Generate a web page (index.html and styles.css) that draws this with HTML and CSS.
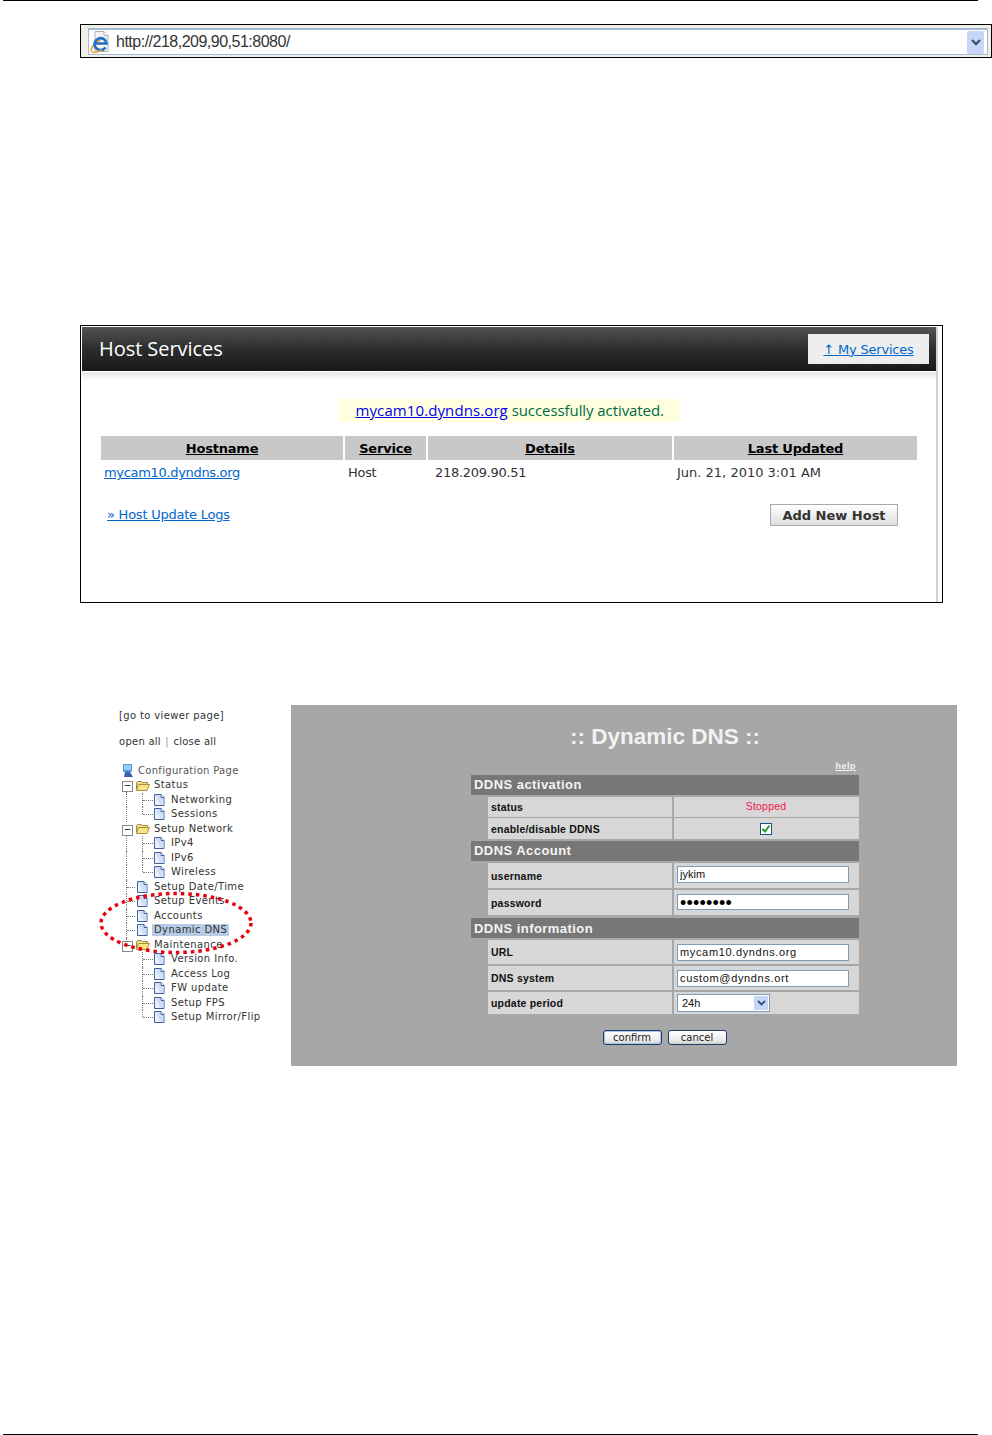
FILE: index.html
```html
<!DOCTYPE html>
<html lang="en">
<head>
<meta charset="utf-8">
<title>Dynamic DNS setup</title>
<link rel="stylesheet" href="styles.css">
</head>
<body>
<svg class="defs" width="0" height="0" aria-hidden="true">
  <symbol id="page" viewBox="0 0 12 12">
    <path d="M1.500.5h6.500l3 3v8h-9.500z" fill="#eaf1fb" stroke="#3f5f9f"/>
    <path d="M2 1h5v3h3.500v7h-3z" fill="#cfdff5"/>
    <path d="M8 .5v3h3" fill="#fff" stroke="#3f5f9f"/>
  </symbol>
  <symbol id="folder" viewBox="0 0 14 11">
    <path d="M.5 9.500V2.500l1-1h4l1 1h5v2" fill="#f3dc83" stroke="#9a8a4a"/>
    <path d="M.5 10.500l2-6h11l-2.500 6z" fill="#f7e487" stroke="#a5913a"/>
  </symbol>
</svg>

<div class="rule"></div>

<section class="addr">
  <div class="addr-field">
    <svg class="ie" width="22" height="24" viewBox="0 0 22 24" aria-hidden="true">
      <path d="M6 1.500h9l4 4v16H6z" fill="#f4f4f4" stroke="#b0b0b0"/>
      <path d="M15 1.500v4h4" fill="#fff" stroke="#b0b0b0"/>
      <path d="M2.500 21.500c-1.500-3 3.500-9 9-12" fill="none" stroke="#e9a93a" stroke-width="2"/>
      <path d="M16.500 17.500a6 6 0 1 1 1-4H6.500" fill="none" stroke="#1f6fc9" stroke-width="2.600"/>
      <path d="M3 22c2 1 6 0 10-2" fill="none" stroke="#e9a93a" stroke-width="1.500"/>
    </svg>
    <span class="addr-url">http://218,209,90,51:8080/</span>
    <span class="addr-btn">
      <svg width="10" height="7" viewBox="0 0 10 7" aria-hidden="true"><path d="M1 1l4 4 4-4" fill="none" stroke="#3d4f6b" stroke-width="2.400"/></svg>
    </span>
  </div>
</section>

<section class="host">
  <div class="host-inner">
    <header class="host-head">
      <h1 class="host-title">Host Services</h1>
      <div class="my-services"><a href="#">↑ My Services</a></div>
    </header>
    <div class="host-shade"></div>
    <div class="msg-wrap">
      <p class="msg"><a href="#">mycam10.dyndns.org</a> successfully activated.</p>
    </div>
    <div class="host-table">
      <div class="ht-row ht-heads">
        <div class="c1"><u>Hostname</u></div>
        <div class="c2"><u>Service</u></div>
        <div class="c3"><u>Details</u></div>
        <div class="c4"><u>Last Updated</u></div>
      </div>
      <div class="ht-row ht-data">
        <div class="c1"><a href="#">mycam10.dyndns.org</a></div>
        <div class="c2 narrow">Host</div>
        <div class="c3 pad3 narrow">218.209.90.51</div>
        <div class="c4">Jun. 21, 2010 3:01 AM</div>
      </div>
    </div>
    <div class="host-foot">
      <a class="logs" href="#">» Host Update Logs</a>
      <button class="add-host" type="button">Add New Host</button>
    </div>
  </div>
</section>

<section class="config">
  <nav class="tree">
    <div class="tree-link">[go to viewer page]</div>
    <div class="tree-open">open all <span class="sep">|</span> close all</div>
    <div class="tn tn-root">
      <svg class="computer" width="13" height="14" viewBox="0 0 13 14" aria-hidden="true">
        <rect x="2" y="0" width="9" height="8" rx="1" fill="#5b8fd8"/>
        <rect x="3" y="1" width="7" height="5" fill="#8fd0f5"/>
        <path d="M4 8h5l3 5H3z" fill="#3b5fb0"/>
      </svg>
      <span class="lbl root-lbl">Configuration Page</span>
    </div>

    <div class="tn"><span class="cell box vline"></span><svg class="ico-f"><use href="#folder"/></svg><span class="lbl">Status</span></div>
    <div class="tn"><span class="cell v1"></span><span class="cell2 tee"></span><svg class="ico-p"><use href="#page"/></svg><span class="lbl">Networking</span></div>
    <div class="tn"><span class="cell v1"></span><span class="cell2 ell"></span><svg class="ico-p"><use href="#page"/></svg><span class="lbl">Sessions</span></div>

    <div class="tn"><span class="cell box vline"></span><svg class="ico-f"><use href="#folder"/></svg><span class="lbl">Setup Network</span></div>
    <div class="tn"><span class="cell v1"></span><span class="cell2 tee"></span><svg class="ico-p"><use href="#page"/></svg><span class="lbl">IPv4</span></div>
    <div class="tn"><span class="cell v1"></span><span class="cell2 tee"></span><svg class="ico-p"><use href="#page"/></svg><span class="lbl">IPv6</span></div>
    <div class="tn"><span class="cell v1"></span><span class="cell2 ell"></span><svg class="ico-p"><use href="#page"/></svg><span class="lbl">Wireless</span></div>

    <div class="tn"><span class="cell v1 h1"></span><svg class="ico-p1"><use href="#page"/></svg><span class="lbl">Setup Date/Time</span></div>
    <div class="tn"><span class="cell v1 h1"></span><svg class="ico-p1"><use href="#page"/></svg><span class="lbl">Setup Events</span></div>
    <div class="tn"><span class="cell v1 h1"></span><svg class="ico-p1"><use href="#page"/></svg><span class="lbl">Accounts</span></div>
    <div class="tn"><span class="cell v1 h1"></span><svg class="ico-p1"><use href="#page"/></svg><span class="lbl sel">Dynamic DNS</span></div>

    <div class="tn"><span class="cell box end"></span><svg class="ico-f"><use href="#folder"/></svg><span class="lbl">Maintenance</span></div>
    <div class="tn"><span class="cell"></span><span class="cell2 tee"></span><svg class="ico-p"><use href="#page"/></svg><span class="lbl">Version Info.</span></div>
    <div class="tn"><span class="cell"></span><span class="cell2 tee"></span><svg class="ico-p"><use href="#page"/></svg><span class="lbl">Access Log</span></div>
    <div class="tn"><span class="cell"></span><span class="cell2 tee"></span><svg class="ico-p"><use href="#page"/></svg><span class="lbl">FW update</span></div>
    <div class="tn"><span class="cell"></span><span class="cell2 tee"></span><svg class="ico-p"><use href="#page"/></svg><span class="lbl">Setup FPS</span></div>
    <div class="tn"><span class="cell"></span><span class="cell2 ell"></span><svg class="ico-p"><use href="#page"/></svg><span class="lbl">Setup Mirror/Flip</span></div>
  </nav>

  <svg class="circle" width="160" height="68" viewBox="0 0 160 68" aria-hidden="true">
    <ellipse cx="77" cy="32" rx="75" ry="29.500" fill="none" stroke="#e8000f" stroke-width="3.500" stroke-dasharray="3.500 4"/>
  </svg>

  <main class="panel">
    <h2 class="panel-title">:: Dynamic DNS ::</h2>
    <div class="help-line"><a href="#">help</a></div>
    <div class="ddns">
      <div class="sec">DDNS activation</div>
      <div class="row h20"><div class="k">status</div><div class="v center stopped">Stopped</div></div>
      <div class="row h21 tight"><div class="k">enable/disable DDNS</div><div class="v center">
        <span class="check"><svg width="10" height="10" viewBox="0 0 10 10" aria-hidden="true"><path d="M1.500 5l2.500 2.500 4.500-6" fill="none" stroke="#21a121" stroke-width="2"/></svg></span>
      </div></div>

      <div class="sec gap2">DDNS Account</div>
      <div class="row h25"><div class="k">username</div><div class="v v-up"><input class="inp" type="text" value="jykim"></div></div>
      <div class="row h25"><div class="k">password</div><div class="v v-up"><input class="inp pw" type="password" value="password"></div></div>

      <div class="sec gap3">DDNS information</div>
      <div class="row h24"><div class="k">URL</div><div class="v"><input class="inp wide" type="text" value="mycam10.dyndns.org"></div></div>
      <div class="row h24"><div class="k">DNS system</div><div class="v"><input class="inp wide" type="text" value="custom@dyndns.ort"></div></div>
      <div class="row h22"><div class="k">update period</div><div class="v">
        <div class="sel-box"><span>24h</span><span class="sel-btn"><svg width="9" height="6" viewBox="0 0 9 6" aria-hidden="true"><path d="M1 1l3.500 3.500L8 1" fill="none" stroke="#3d4f6b" stroke-width="1.800"/></svg></span></div>
      </div></div>
    </div>
    <div class="actions">
      <button class="btn btn-confirm" type="button">confirm</button>
      <button class="btn" type="button">cancel</button>
    </div>
  </main>
</section>

<div class="rule rule-bottom"></div>
</body>
</html>
```

FILE: styles.css
```css
* { box-sizing: border-box; }
html, body { margin: 0; padding: 0; background: #fff; }
body {
  width: 992px;
  height: 1435px;
  display: flex;
  flex-direction: column;
  overflow: hidden;
  font-family: "DejaVu Sans", sans-serif;
}
.defs { position: absolute; }
.rule { height: 1px; width: 975px; margin-left: 3px; background: #000; flex: none; }
.rule-bottom { margin-top: auto; }

/* address bar */
.addr {
  margin: 23px 0 0 80px;
  width: 912px;
  height: 34px;
  border: 1px solid #000;
  background: #f1f0e8;
  padding: 3px 3px 1px 7px;
  flex: none;
}
.addr-field {
  height: 27px;
  border: 1px solid #a4b9d6;
  border-top: 2px solid #a4b9d6;
  background: #fff;
  display: flex;
  align-items: center;
  padding-right: 3px;
}
.ie { flex: none; }
.addr-url {
  margin-left: 5px;
  font: 16px "Liberation Sans", sans-serif;
  color: #333;
  letter-spacing: -.5px;
}
.addr-btn {
  margin-left: auto;
  width: 17px;
  height: 23px;
  background: #c6d6f9;
  border-radius: 2px;
  display: flex;
  align-items: center;
  justify-content: center;
}

/* host services */
.host {
  margin: 267px 0 0 80px;
  width: 863px;
  height: 278px;
  border: 1px solid #000;
  padding: 1px 4px 0 1px;
  background: #fff;
  flex: none;
}
.host-inner {
  height: 100%;
  border-right: 2px solid #d2d2d2;
  width: 856px;
}
.host-head {
  height: 44px;
  background:
    repeating-linear-gradient(90deg, rgba(255,255,255,.015) 0 1px, transparent 1px 3px),
    linear-gradient(#525252, #2c2c2c 50%, #181818);
  display: flex;
  align-items: center;
  justify-content: space-between;
  padding: 0 7px 0 17px;
}
.host-title {
  margin: 0 0 2px;
  font: 400 20px "Open Sans", sans-serif;
  color: #fff;
  letter-spacing: -.06px;
}
.my-services {
  width: 121px;
  height: 30px;
  background: #eee;
  display: flex;
  align-items: center;
  justify-content: center;
  font-size: 13px;
  letter-spacing: -.2px;
}
.my-services a, .host-table a, .logs { color: #0066cc; }
.host-shade {
  height: 9px;
  margin-top: 1px;
  background: linear-gradient(#e6e6e6, #fff);
}
.msg-wrap { display: flex; justify-content: center; margin-top: 18px; }
.msg {
  margin: 0;
  width: 341px;
  height: 23px;
  background: #ffffe0;
  color: #006b45;
  font: 15px/23px "Open Sans", sans-serif;
  letter-spacing: -.08px;
  padding-left: 17px;
}
.msg a { color: #0000ee; letter-spacing: .1px; }
.host-table { margin: 14px 0 0 19px; width: 816px; font-size: 13px; color: #333; }
.host-table a { letter-spacing: -.32px; }
.narrow { letter-spacing: -.3px; }
.ht-row { display: flex; gap: 2px; }
.c1 { width: 242px; }
.c2 { width: 81px; }
.c3 { width: 244px; }
.c4 { width: 243px; }
.ht-heads { height: 24px; line-height: 26px; font-weight: 700; text-align: center; color: #000; letter-spacing: -.2px; }
.ht-heads > div { background: #c8c8c8; }
.ht-data { height: 26px; line-height: 26px; }
.ht-data > div { padding-left: 3px; }
.ht-data > .pad3 { padding-left: 7px; }
.host-foot {
  margin: 18px 0 0 25px;
  width: 791px;
  display: flex;
  align-items: center;
  justify-content: space-between;
  font-size: 13px;
}
.logs { letter-spacing: -.24px; margin-bottom: 2px; }
.add-host {
  width: 128px;
  height: 22px;
  padding: 0;
  border: 1px solid #aaa;
  background: linear-gradient(#fff, #dedede);
  font: 700 13px "DejaVu Sans", sans-serif;
  color: #333;
}

/* config */
.config {
  position: relative;
  margin-top: 102px;
  height: 361px;
  display: flex;
  padding-left: 119px;
  flex: none;
}
.tree { width: 172px; font-size: 10px; color: #333; padding-top: 5px; flex: none; }
.tree-link { height: 12px; line-height: 12px; letter-spacing: .36px; }
.tree-open { height: 12px; line-height: 12px; margin-top: 14px; letter-spacing: .26px; }
.sep { color: #999; margin: 0 1px; }
.tn { display: flex; align-items: center; height: 14.500px; position: relative; }
.tn-root { margin-top: 15.500px; padding-left: 2px; }
.lbl { line-height: 12px; white-space: nowrap; letter-spacing: .4px; padding: 0 2px; }
.root-lbl { color: #555; letter-spacing: .3px; }
.sel { background: #b8cbe6; }
.cell { width: 15px; height: 100%; position: relative; flex: none; }
.cell2 { width: 19px; height: 100%; position: relative; flex: none; }
.v1::before, .vline::after {
  content: "";
  position: absolute;
  left: 7px;
  top: 0;
  bottom: 0;
  border-left: 1px dotted #777;
}
.vline::after { top: 50%; }
.h1::after, .tee::after, .ell::after {
  content: "";
  position: absolute;
  top: 7px;
  border-top: 1px dotted #777;
}
.h1::after { left: 8px; width: 8px; }
.tee::after, .ell::after { left: 9px; width: 10px; }
.tee::before, .ell::before {
  content: "";
  position: absolute;
  left: 8px;
  top: 0;
  bottom: 0;
  border-left: 1px dotted #777;
}
.ell::before { bottom: 50%; }
.box::before {
  content: "−";
  position: absolute;
  z-index: 1;
  left: 3px;
  top: 3px;
  width: 9px;
  height: 9px;
  border: 1px solid #888;
  background: #fff;
  font: 9px/7px "DejaVu Sans", sans-serif;
  text-align: center;
  color: #000;
}
.end::after {
  content: "";
  position: absolute;
  left: 7px;
  top: 0;
  height: 4px;
  border-left: 1px dotted #777;
}
.ico-f { width: 14px; height: 11px; margin: 0 2px 0 2px; flex: none; }
.ico-p { width: 12px; height: 12px; margin-right: 4px; flex: none; }
.ico-p1 { width: 12px; height: 12px; margin: 0 4px 0 2px; flex: none; }
.computer { flex: none; margin-right: 2px; }

.circle { position: absolute; left: 99px; top: 186px; pointer-events: none; z-index: 2; }

.panel {
  width: 666px;
  height: 361px;
  background: #a7a7a7;
  padding: 18px 0 0 180px;
  font-family: "Liberation Sans", sans-serif;
  flex: none;
}
.panel-title {
  margin: 0;
  width: 388px;
  height: 28px;
  font: 700 22.500px/28px "Liberation Sans", sans-serif;
  color: #f2f2f2;
  text-align: center;
}
.help-line {
  margin-top: 10px;
  width: 385px;
  height: 12px;
  line-height: 10px;
  text-align: right;
  font-size: 9px;
  font-weight: 700;
  letter-spacing: .5px;
}
.help-line a { color: #f2f2f2; }
.ddns { width: 388px; margin-top: 2px; }
.sec {
  height: 20px;
  line-height: 20px;
  background: #777;
  color: #f4f4f4;
  font-weight: 700;
  font-size: 13px;
  padding-left: 3px;
  letter-spacing: .45px;
}
.gap2 { margin-top: 2px; }
.gap3 { margin-top: 3px; line-height: 21px; }
.row { display: flex; gap: 2px; margin: 2px 0 0 17px; }
.tight { margin-top: 1px; }
.h20 { height: 20px; }
.h21 { height: 21px; }
.h22 { height: 22px; }
.h24 { height: 24px; }
.h25 { height: 25px; }
.k {
  width: 184px;
  background: #d7d7d7;
  padding-left: 3px;
  display: flex;
  align-items: center;
  font: 700 10.500px "Liberation Sans", sans-serif;
  letter-spacing: .2px;
  color: #111;
}
.v {
  width: 185px;
  background: #d7d7d7;
  padding-left: 3px;
  display: flex;
  align-items: center;
}
.v-up { padding-bottom: 2px; }
.center { justify-content: center; padding-left: 0; padding-right: 1px; }
.stopped { color: #f0164f; font-size: 10.500px; letter-spacing: .2px; padding-bottom: 2px; }
.check {
  width: 12px;
  height: 12px;
  border: 1px solid #1c5180;
  background: #fff;
  display: flex;
  align-items: center;
  justify-content: center;
}
.inp {
  width: 172px;
  height: 17px;
  border: 1px solid #7f9db9;
  padding: 0 2px 2px;
  background: #fff;
  font: 11px "Liberation Sans", sans-serif;
  color: #111;
  outline: none;
}
.pw { font-size: 18px; height: 16px; padding: 4px 2px 0; letter-spacing: .2px; color: #000; }
.wide { letter-spacing: .65px; padding-bottom: 0; }
.sel-box {
  width: 93px;
  height: 18px;
  border: 1px solid #7f9db9;
  background: #fff;
  display: flex;
  align-items: center;
  justify-content: space-between;
  padding: 0 1px 0 4px;
  font-size: 11px;
  color: #111;
}
.sel-btn {
  width: 14px;
  height: 14px;
  background: #c6d6f9;
  display: flex;
  align-items: center;
  justify-content: center;
  border-radius: 1px;
}
.actions {
  width: 388px;
  margin-top: 16px;
  display: flex;
  justify-content: center;
  gap: 6px;
  padding-right: 1px;
}
.btn {
  width: 59px;
  height: 15px;
  padding: 0;
  border: 1px solid #1c3c66;
  border-radius: 3px;
  background: linear-gradient(#fff, #ececec 70%, #cfcfc8);
  font: 10px/12px "DejaVu Sans", sans-serif;
  color: #222;
}
.btn-confirm { box-shadow: inset 0 0 0 1px #a9c4ee; }
```
